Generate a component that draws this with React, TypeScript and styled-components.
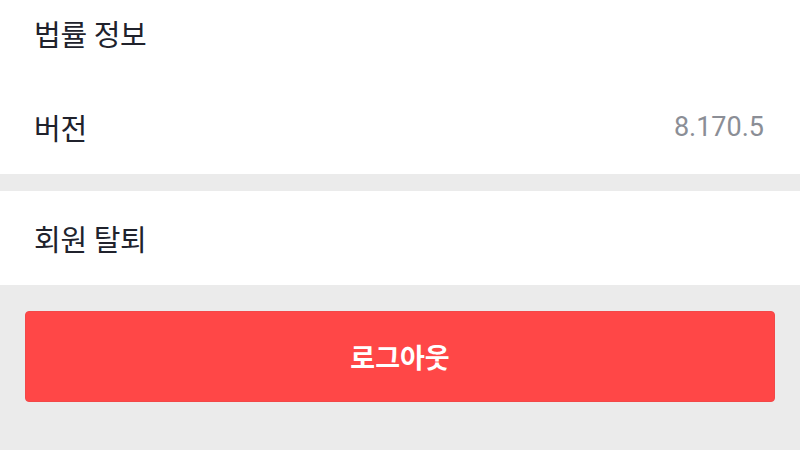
import React from "react";
import styled, { createGlobalStyle } from "styled-components";

const GlobalStyle = createGlobalStyle`
  html, body {
    margin: 0;
    padding: 0;
    background: #ebebeb;
    overflow: hidden;
  }
  body {
    font-family: Roboto, "Noto Sans CJK KR", sans-serif;
    -webkit-font-smoothing: antialiased;
  }
`;

const Page = styled.div`
  width: 800px;
  height: 450px;
  background: #ebebeb;
  overflow: hidden;
`;

const Scroller = styled.div`
  display: flex;
  flex-direction: column;
  margin-top: -14px;
`;

const Section = styled.section<{ $gapAfter?: number }>`
  display: flex;
  flex-direction: column;
  background: #ffffff;
  margin-bottom: ${(p) => p.$gapAfter ?? 0}px;
`;

const Row = styled.div`
  height: 94px;
  display: flex;
  align-items: center;
  justify-content: space-between;
  padding: 0 36px 0 34px;
  box-sizing: border-box;
`;

const Label = styled.span`
  font-family: Roboto, "Noto Sans CJK KR", sans-serif;
  font-size: 29px;
  color: #20222c;
  letter-spacing: -0.3px;
`;

const Value = styled.span`
  font-family: Roboto, "Noto Sans CJK KR", sans-serif;
  font-size: 27px;
  color: #8b8e96;
`;

const ButtonArea = styled.div`
  padding: 26px 25px;
  display: flex;
`;

const LogoutButton = styled.button`
  flex: 1;
  height: 91px;
  border: 1px solid #f24848;
  border-radius: 4px;
  background: #ff4747;
  color: #ffffff;
  font-family: Roboto, "Noto Sans CJK KR", sans-serif;
  font-size: 27px;
  font-weight: 600;
  cursor: pointer;
  display: flex;
  align-items: center;
  justify-content: center;
  padding: 0;
`;

export default function App() {
  return (
    <Page>
      <GlobalStyle />
      <Scroller>
        <Section $gapAfter={17}>
          <Row>
            <Label>법률 정보</Label>
          </Row>
          <Row>
            <Label>버전</Label>
            <Value>8.170.5</Value>
          </Row>
        </Section>
        <Section>
          <Row>
            <Label>회원 탈퇴</Label>
          </Row>
        </Section>
        <ButtonArea>
          <LogoutButton>로그아웃</LogoutButton>
        </ButtonArea>
      </Scroller>
    </Page>
  );
}
